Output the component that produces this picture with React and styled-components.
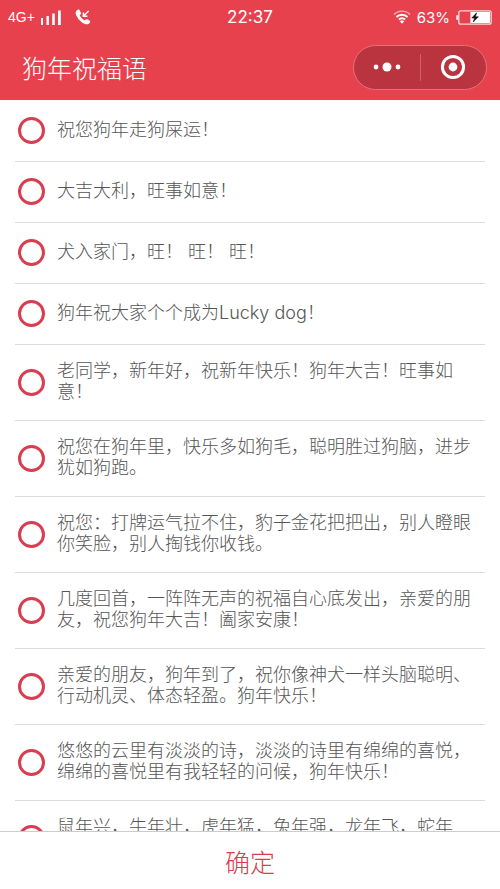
import React, { useState } from "react";
import styled, { createGlobalStyle } from "styled-components";

const wishes = [
  "祝您狗年走狗屎运！",
  "大吉大利，旺事如意！",
  "犬入家门，旺！ 旺！ 旺！",
  "狗年祝大家个个成为Lucky dog！",
  "老同学，新年好，祝新年快乐！狗年大吉！旺事如意！",
  "祝您在狗年里，快乐多如狗毛，聪明胜过狗脑，进步犹如狗跑。",
  "祝您：打牌运气拉不住，豹子金花把把出，别人瞪眼你笑脸，别人掏钱你收钱。",
  "几度回首，一阵阵无声的祝福自心底发出，亲爱的朋友，祝您狗年大吉！阖家安康！",
  "亲爱的朋友，狗年到了，祝你像神犬一样头脑聪明、行动机灵、体态轻盈。狗年快乐！",
  "悠悠的云里有淡淡的诗，淡淡的诗里有绵绵的喜悦，绵绵的喜悦里有我轻轻的问候，狗年快乐！",
  "鼠年兴，牛年壮，虎年猛，兔年强，龙年飞，蛇年顺！",
];

const SignalIcon = () => (
  <svg width="20" height="15" viewBox="0 0 20 15" fill="#fff">
    <rect x="0" y="8" width="2" height="7" />
    <rect x="5.5" y="6" width="2.4" height="9" />
    <rect x="11.2" y="3.5" width="2.6" height="11.5" />
    <rect x="17" y="0.5" width="2.8" height="14.5" />
  </svg>
);

const CallIcon = () => (
  <svg width="16" height="16" viewBox="0 0 16 16" fill="none">
    <path
      d="M3.2 0.6 C1.2 1.4 0.2 3 0.8 5 C2.2 9.6 6.2 13.8 10.6 15.2 C12.6 15.8 14.4 14.8 15.2 13 C15.4 12.5 15.2 12 14.8 11.7 L12.4 10.3 C11.9 10 11.3 10.1 10.9 10.5 L9.8 11.5 C7.6 10.5 5.6 8.4 4.7 6.2 L5.7 5.2 C6.1 4.8 6.2 4.3 5.9 3.8 L4.5 1 C4.2 0.5 3.7 0.4 3.2 0.6Z"
      fill="#fff"
    />
    <path d="M13.6 2 L8.8 6.8 M8.4 3.4 V7.2 H12.4" stroke="#fff" strokeWidth="1.5" />
  </svg>
);

const WifiIcon = () => (
  <svg width="18" height="14" viewBox="0 0 18 14" fill="none" stroke="#fff">
    <path d="M1 4.6 C5.4 0 12.6 0 17 4.6" strokeWidth="1.4" opacity="0.6" />
    <path d="M3.4 7 C6.6 3.9 11.4 3.9 14.6 7" strokeWidth="2" />
    <path d="M5.9 9.6 C7.8 8 10.2 8 12.1 9.6" strokeWidth="1.9" />
    <path d="M6.8 11.2 C8 10.3 10 10.3 11.2 11.2 L9 13.8Z" fill="#fff" stroke="none" />
  </svg>
);

const BatteryIcon = () => (
  <svg width="36" height="15" viewBox="0 0 36 15" fill="none">
    <rect x="0.2" y="5" width="2" height="5" rx="1" fill="#fff" opacity="0.85" />
    <rect x="2.8" y="0.8" width="32.4" height="13.4" rx="2" stroke="#fff" strokeOpacity="0.8" strokeWidth="1.3" />
    <path d="M14.4 2 H34 V13 H14.4Z" fill="#fff" />
    <path d="M20.6 2.8 L15.8 8 H18.6 L17.2 12 L22.4 6.8 H19.4Z" fill="#111" stroke="#111" strokeWidth="0.6" />
  </svg>
);

const MoreIcon = () => (
  <svg width="28" height="10" viewBox="0 0 28 10" fill="#fff">
    <circle cx="3" cy="5" r="2.4" />
    <circle cx="14" cy="5" r="4.5" />
    <circle cx="25" cy="5" r="2.4" />
  </svg>
);

const CloseIcon = () => (
  <svg width="26" height="26" viewBox="0 0 26 26">
    <circle cx="13" cy="13" r="10.6" fill="none" stroke="#fff" strokeWidth="3" />
    <circle cx="13" cy="13" r="4.4" fill="#fff" />
  </svg>
);

const App = () => {
  const [selected, setSelected] = useState(null);

  return (
    <Page>
      <GlobalStyle />
      <Header>
        <StatusBar>
          <StatusGroup>
            <Network>4G+</Network>
            <SignalIcon />
            <CallSlot>
              <CallIcon />
            </CallSlot>
          </StatusGroup>
          <Clock>22:37</Clock>
          <StatusGroup $end>
            <WifiIcon />
            <Percent>63%</Percent>
            <BatteryIcon />
          </StatusGroup>
        </StatusBar>
        <TitleBar>
          <Title>狗年祝福语</Title>
          <Capsule>
            <CapsuleButton type="button" aria-label="更多">
              <MoreIcon />
            </CapsuleButton>
            <CapsuleLine />
            <CapsuleButton type="button" aria-label="关闭">
              <CloseIcon />
            </CapsuleButton>
          </Capsule>
        </TitleBar>
      </Header>

      <List>
        {wishes.map((wish, i) => (
          <Row key={i}>
            <Radio
              type="radio"
              name="wish"
              checked={selected === i}
              onChange={() => setSelected(i)}
            />
            <Wish>{wish}</Wish>
          </Row>
        ))}
      </List>

      <Confirm type="button">确定</Confirm>
    </Page>
  );
};

const GlobalStyle = createGlobalStyle`
  * {
    box-sizing: border-box;
  }

  body {
    margin: 0;
    background: #fff;
    font-family: "Noto Sans CJK SC", sans-serif;
    font-weight: 300;
  }

  svg {
    display: block;
    flex: none;
  }
`;

const Page = styled.div`
  display: flex;
  flex-direction: column;
  height: 100vh;
`;

const Header = styled.header`
  flex: none;
  background: #e7414e;
  color: #fff;
`;

const StatusBar = styled.div`
  display: grid;
  grid-template-columns: 1fr auto 1fr;
  align-items: center;
  height: 34px;
  padding: 0 8px;
  font-family: Inter, "Liberation Sans", sans-serif;
  font-weight: 400;
`;

const StatusGroup = styled.div`
  display: flex;
  align-items: center;
  justify-content: ${({ $end }) => ($end ? "flex-end" : "flex-start")};
  gap: 6px;
`;

const Network = styled.span`
  font-family: "Liberation Sans", sans-serif;
  font-size: 14px;
`;

const CallSlot = styled.span`
  padding-left: 8px;
`;

const Clock = styled.time`
  font-size: 17px;
`;

const Percent = styled.span`
  font-size: 15px;
`;

const TitleBar = styled.div`
  display: flex;
  align-items: center;
  justify-content: space-between;
  height: 66px;
  padding: 0 13px 0 22px;
`;

const Title = styled.h1`
  margin: 0;
  font-size: 25px;
  font-weight: 300;
  line-height: 32px;
`;

const Capsule = styled.div`
  display: flex;
  align-items: center;
  width: 134px;
  height: 45px;
  border: 1px solid #e8707a;
  border-radius: 23px;
  background: #b9343f;
`;

const CapsuleButton = styled.button`
  display: flex;
  flex: 1;
  align-items: center;
  justify-content: center;
  height: 100%;
  padding: 0;
  border: 0;
  background: none;
  cursor: pointer;
`;

const CapsuleLine = styled.span`
  width: 1px;
  height: 27px;
  background: #d0606a;
`;

const List = styled.main`
  flex: 1;
  min-height: 0;
  padding: 1px 15px 0;
  overflow-y: auto;
  scrollbar-width: none;
`;

const Row = styled.label`
  display: flex;
  align-items: center;
  gap: 12px;
  min-height: 61px;
  padding: 15px 0 16px 3px;
  border-bottom: 1px solid #dcdcdc;
  cursor: pointer;
`;

const Radio = styled.input`
  appearance: none;
  flex: none;
  width: 27px;
  height: 27px;
  margin: 0;
  border: 3px solid #d83d50;
  border-radius: 50%;
  cursor: pointer;

  &:checked {
    background: #d83d50;
    box-shadow: inset 0 0 0 4px #fff;
  }
`;

const Wish = styled.span`
  padding-bottom: 2px;
  color: #555;
  font-family: Inter, "Noto Sans CJK SC", sans-serif;
  font-size: 18px;
  line-height: 21px;
`;

const Confirm = styled.button`
  flex: none;
  height: 58px;
  padding: 0;
  border: 0;
  border-top: 1px solid #ccc;
  background: #fff;
  color: #d83d50;
  font-family: inherit;
  font-size: 25px;
  font-weight: 300;
  cursor: pointer;
`;

export default App;
